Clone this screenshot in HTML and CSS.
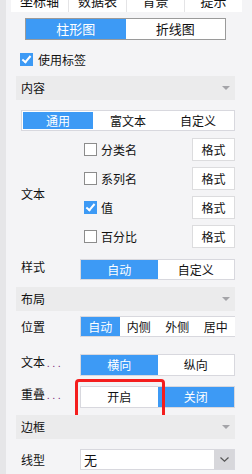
FILE: index.html
```html
<!DOCTYPE html>
<html lang="zh">
<head>
    <meta charset="UTF-8">
    <meta name="viewport" content="width=device-width, initial-scale=1.0">
    <title>标签设置</title>
    <link rel="stylesheet" href="styles.css">
</head>
<body>

<div class="top-tabs">
    <div class="tab">坐标轴</div>
    <div class="tab">数据表</div>
    <div class="tab">背景</div>
    <div class="tab">提示</div>
</div>

<div class="seg chart-type">
    <div class="seg-item on">柱形图</div>
    <div class="seg-item">折线图</div>
</div>

<div class="check-row">
    <span class="cb on"></span>
    <span>使用标签</span>
</div>

<div class="section-head">内容<span class="caret"></span></div>

<div class="sub-tabs">
    <div class="seg-item on">通用</div>
    <div class="seg-item">富文本</div>
    <div class="seg-item">自定义</div>
</div>

<div class="text-group">
    <div class="group-label">文本</div>
    <div class="group-items">
        <div class="item"><span class="cb"></span><span class="item-name">分类名</span><button class="fmt">格式</button></div>
        <div class="item"><span class="cb"></span><span class="item-name">系列名</span><button class="fmt">格式</button></div>
        <div class="item"><span class="cb on"></span><span class="item-name">值</span><button class="fmt">格式</button></div>
        <div class="item"><span class="cb"></span><span class="item-name">百分比</span><button class="fmt">格式</button></div>
    </div>
</div>

<div class="form-row row-style">
    <div class="row-label up">样式</div>
    <div class="seg">
        <div class="seg-item on">自动</div>
        <div class="seg-item">自定义</div>
    </div>
</div>

<div class="section-head near">布局<span class="caret"></span></div>

<div class="form-row row-pos">
    <div class="row-label">位置</div>
    <div class="seg">
        <div class="seg-item on">自动</div>
        <div class="seg-item">内侧</div>
        <div class="seg-item">外侧</div>
        <div class="seg-item">居中</div>
    </div>
</div>

<div class="form-row row-dir">
    <div class="row-label up">文本<span class="dots">...</span></div>
    <div class="seg">
        <div class="seg-item on">横向</div>
        <div class="seg-item">纵向</div>
    </div>
</div>

<div class="form-row row-overlap">
    <div class="row-label up">重叠<span class="dots">...</span></div>
    <div class="seg">
        <div class="seg-item">开启</div>
        <div class="seg-item on">关闭</div>
    </div>
    <div class="mark"></div>
</div>

<div class="section-head near">边框<span class="caret"></span></div>

<div class="form-row row-line">
    <div class="row-label">线型</div>
    <div class="select">
        <span class="select-val">无</span>
        <span class="select-btn">
            <svg width="9" height="5" viewBox="0 0 9 5"><path d="M0.5 0.5 L4.5 4.2 L8.5 0.5" fill="none" stroke="#555" stroke-width="1.2"/></svg>
        </span>
    </div>
</div>

</body>
</html>
```

FILE: styles.css
```css
body {
    margin: 0;
    width: 252px;
    height: 474px;
    box-sizing: border-box;
    overflow: hidden;
    background-color: #f4f4f6;
    border-left: 6px solid #e6e6e8;
    font-family: "Noto Sans CJK SC", "Microsoft YaHei", sans-serif;
    font-size: 12px;
    color: #111;
}
.top-tabs {
    display: flex;
    height: 22px;
    margin: -10px 10px 0 5px;
    background-color: #fff;
}
.tab {
    flex: 1;
    text-align: center;
    line-height: 22px;
    font-size: 13px;
    border-right: 1px solid #e4e4e6;
}
.tab:last-child {
    border-right: none;
}
.seg {
    display: flex;
    flex: 1;
    height: 21px;
    box-sizing: border-box;
    border: 1px solid #d8d8de;
    background-color: #fff;
}
.seg-item {
    flex: 1;
    text-align: center;
    line-height: 19px;
}
.seg-item.on {
    background-color: #3d9af5;
    color: #fff;
}
.chart-type {
    height: 22px;
    margin: 6px 26px 0 19px;
    border-color: #9a9a9a;
    font-size: 13px;
}
.chart-type .seg-item {
    line-height: 20px;
}
.check-row {
    display: flex;
    align-items: center;
    height: 14px;
    margin: 12px 0 0 14px;
}
.cb {
    position: relative;
    width: 13px;
    height: 13px;
    box-sizing: border-box;
    border: 1px solid #8c8c8c;
    background-color: #fff;
    margin-right: 4px;
    flex: none;
}
.cb.on {
    border-color: #3d9af5;
    background-color: #3d9af5;
}
.cb.on::after {
    content: "";
    position: absolute;
    left: 3px;
    top: 0px;
    width: 3px;
    height: 7px;
    border: solid #fff;
    border-width: 0 2px 2px 0;
    transform: rotate(40deg);
}
.check-row .cb {
    margin-right: 5px;
}
.section-head {
    position: relative;
    height: 24px;
    line-height: 24px;
    margin: 10px 17px 0 10px;
    padding-left: 5px;
    background-color: #ebebec;
}
.section-head.near {
    margin-top: 7px;
}
.caret {
    position: absolute;
    right: 5px;
    top: 10px;
    width: 0;
    height: 0;
    border-left: 4px solid transparent;
    border-right: 4px solid transparent;
    border-top: 4px solid #a4a4a8;
}
.sub-tabs {
    display: flex;
    height: 21px;
    box-sizing: border-box;
    margin: 10px 17px 0 15px;
    padding: 1px;
    border: 1px solid #d8d8de;
    background-color: #fff;
}
.sub-tabs .seg-item {
    line-height: 17px;
}
.text-group {
    display: flex;
    align-items: center;
    margin: 7px 17px 0 15px;
}
.group-label {
    width: 63px;
}
.group-items {
    flex: 1;
    display: flex;
    flex-direction: column;
    gap: 6px;
}
.item {
    display: flex;
    align-items: center;
    height: 23px;
}
.item-name {
    flex: 1;
}
.fmt {
    width: 43px;
    height: 23px;
    padding: 0;
    border: 1px solid #dcdcde;
    background-color: #fff;
    font-family: inherit;
    font-size: 12px;
    color: #111;
}
.form-row {
    position: relative;
    display: flex;
    align-items: center;
    margin: 0 17px 0 15px;
}
.row-label {
    width: 59px;
    flex: none;
}
.row-label.up {
    align-self: flex-start;
    line-height: 14px;
    padding-top: 1px;
}
.dots {
    font-size: 9px;
    color: #7a2c7a;
    letter-spacing: 3px;
    margin-left: 2px;
}
.row-style {
    margin-top: 11px;
}
.row-pos {
    margin-top: 5px;
}
.row-pos .seg {
    border-right: none;
}
.row-dir {
    margin-top: 17px;
}
.row-dir .seg {
    height: 22px;
}
.row-dir .seg-item {
    line-height: 20px;
}
.row-overlap {
    margin-top: 10px;
}
.row-overlap .seg {
    height: 22px;
}
.row-overlap .seg-item {
    line-height: 20px;
}
.mark {
    position: absolute;
    left: 54px;
    top: -7px;
    width: 90px;
    height: 41px;
    box-sizing: border-box;
    border: 3px solid #f41d1d;
    border-radius: 4px;
}
.row-line {
    margin-top: 10px;
}
.select {
    flex: 1;
    display: flex;
    height: 21px;
    box-sizing: border-box;
    border: 1px solid #d8d8de;
    background-color: #fff;
}
.select-val {
    flex: 1;
    padding-left: 3px;
    line-height: 19px;
    font-size: 13px;
}
.select-btn {
    width: 20px;
    display: flex;
    align-items: center;
    justify-content: center;
    background-color: #d7d7db;
}
```
